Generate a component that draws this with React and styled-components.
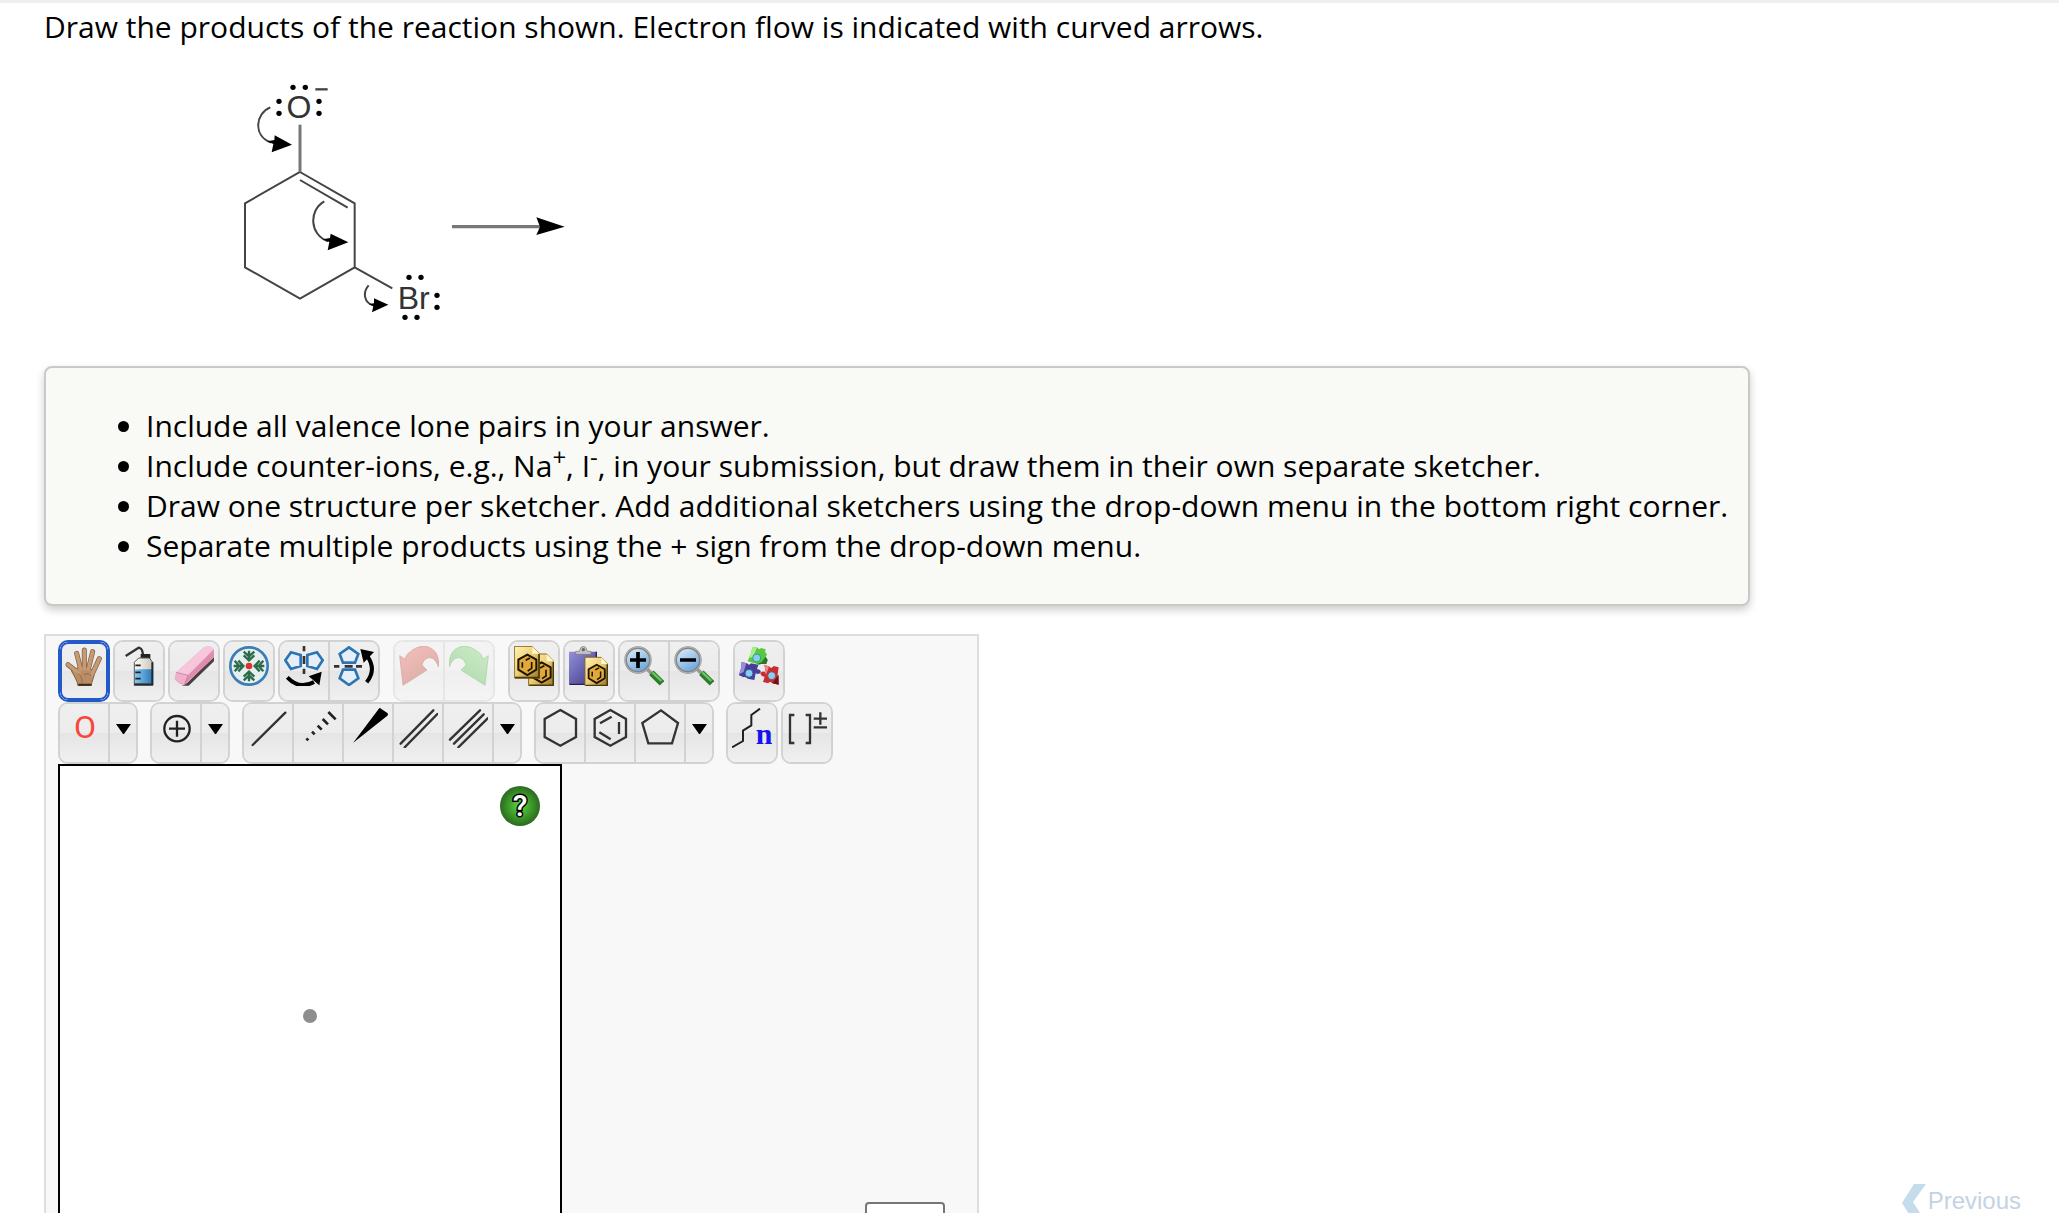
import { useState } from "react";
import styled, { createGlobalStyle, css } from "styled-components";

const GlobalStyle = createGlobalStyle`
  * { box-sizing: border-box; }
  body {
    margin: 0;
    background: #fff;
    color: #000;
    font-family: "Open Sans", "Noto Sans", sans-serif;
  }
`;

const Page = styled.div`
  display: flex;
  justify-content: space-between;
  height: 100vh;
  overflow: hidden;
  border-top: 3px solid #efefef;
`;

const Question = styled.main`
  flex: 1;
  padding: 4px 0 0 44px;
`;

const Prompt = styled.p`
  margin: 0;
  font-size: 30px;
  line-height: 40px;
`;

const Reaction = styled.svg`
  display: block;
  margin: 23px 0 26px 176px;
`;

const Notes = styled.div`
  width: fit-content;
  padding: 38px 20px;
  border: 2px solid #c8cac8;
  border-radius: 8px;
  background: #f9faf5;
  box-shadow: 0 4px 8px rgba(0, 0, 0, 0.2);
`;

const NoteList = styled.ul`
  margin: 0;
  padding-left: 80px;
  font-size: 30px;
  line-height: 40px;

  sup {
    font-size: 24px;
    line-height: 0;
  }
`;

const Sketcher = styled.section`
  width: fit-content;
  margin-top: 28px;
  padding: 4px 0 0 12px;
  border: 2px solid #ddd;
  background: #f8f8f8;
`;

const Toolbar = styled.div`
  display: flex;
  gap: ${(props) => props.$gap}px;
`;

const Cluster = styled.div`
  display: flex;
  gap: 3px;
`;

const Group = styled.div`
  display: flex;
  height: 62px;
  border: 2px solid ${(props) => (props.$active ? "#2459c8" : "#d2d2d2")};
  border-radius: 10px;
  overflow: hidden;
  opacity: ${(props) => (props.$faded ? 0.45 : 1)};
`;

const ToolButton = styled.button`
  display: flex;
  justify-content: center;
  align-items: flex-start;
  width: ${(props) => (props.$narrow ? 26 : 48)}px;
  padding: 4px 0;
  border: 0;
  background: linear-gradient(#efefef, #ececec 50%, #e5e5e5 50%, #f0f0f0);
  box-sizing: content-box;
  height: 50px;

  & + & {
    border-left: 2px solid #d2d2d2;
  }

  ${(props) =>
    props.$active &&
    css`
      border-radius: 8px;
      outline: none;
      box-shadow: inset 0 0 0 2px #2459c8;
    `}
`;

const Workspace = styled.div`
  display: flex;
  justify-content: space-between;
  align-items: flex-end;
  width: 919px;
`;

const Canvas = styled.div`
  position: relative;
  display: grid;
  place-items: center;
  width: 504px;
  height: 504px;
  border: 2px solid #000;
  background: #fff;
`;

const Atom = styled.span`
  width: 14px;
  height: 14px;
  border-radius: 50%;
  background: #8e8e8e;
`;

const HelpButton = styled.button`
  position: absolute;
  top: 20px;
  right: 20px;
  padding: 0;
  border: 0;
  background: none;
  line-height: 0;
`;

const AddSelect = styled.select`
  width: 80px;
  height: 40px;
  margin: 0 32px 26px 0;
  border: 2px solid #767676;
  border-radius: 4px;
  background: #fff;
  font-size: 24px;
`;

const PreviousLink = styled.a`
  display: flex;
  align-items: center;
  align-self: flex-end;
  height: 36px;
  margin: 0 38px -6px 0;
  color: #c3d3e3;
  font: 24px/28px "Liberation Sans", Arial, sans-serif;
  text-decoration: none;
`;

const pageShape = "M0 0H54L75 22V95H0Z";
const hexShape = "M61 6L108 33V87L61 113L14 87V33Z";

const Magnifier = ({ plus }) => (
  <>
    <path d="M70 70L88 87" stroke="#999" strokeWidth="11" />
    <path d="M82 80L114 112" stroke="#2d7a2b" strokeWidth="19" />
    <path d="M85 79L112 105" stroke="#6cc565" strokeWidth="7" />
    <circle cx="42" cy="42" r="37" fill="url(#lens)" stroke="#858585" strokeWidth="8" />
    <circle cx="42" cy="42" r="39" fill="none" stroke="#d0d0d0" strokeWidth="2" />
    <path d={plus ? "M18 42H66M42 18V66" : "M18 42H66"} stroke="#000" strokeWidth="11" />
  </>
);

const RingSheet = ({ x, y, scale = 1 }) => (
  <g transform={`translate(${x} ${y}) scale(${scale})`}>
    <path d={pageShape} fill="url(#gold)" stroke="#8a6a1c" strokeWidth="3" />
    <path d="M54 0V22H75Z" fill="#fff7cf" />
    <path d="M2 94H74V24" fill="none" stroke="#4c390a" strokeWidth="5" />
    <path d="M39 25L66 40V70L39 86L12 70V40Z" fill="#e0a93a" stroke="#1c1503" strokeWidth="6" />
    <path d="M24 48V64M34 42L47 35M52 47V66L40 74" fill="none" stroke="#1c1503" strokeWidth="5" />
  </g>
);

const Fingers = "M45 82L12 56M50 70L38 22M61 68V12M73 70L86 17M82 90L106 38";

const UndoArrow = "M2 29L12 118L84 72L69 58C76 27 108 27 118 62C126 8 76 -18 34 17Q20 25 19 40Z";

const icons = {
  hand: (
    <>
      <path d={Fingers} stroke="#7d5f46" strokeWidth="15" strokeLinecap="round" fill="none" />
      <path d="M33 70C45 60 76 60 90 78C92 94 82 106 82 119H42C40 103 30 90 22 74Z" fill="#b98c66" stroke="#7d5f46" strokeWidth="3" />
      <path d={Fingers} stroke="#c69a72" strokeWidth="11" strokeLinecap="round" fill="none" />
      <path d="M42 82Q56 94 54 112M60 86Q76 78 82 92" stroke="#96694a" strokeWidth="3" fill="none" />
      <path d="M43 113H82V119H43Z" fill="#3c2819" />
    </>
  ),
  bottle: (
    <>
      <path d="M20 30L59 5Q70 6 72 26" fill="none" stroke="#333" strokeWidth="7" />
      <path d="M65 24H94V38H65Z" fill="#222" />
      <path d="M59 36H91L101 49V119H46V49Z" fill="url(#cream)" stroke="#555" strokeWidth="3" />
      <path d="M48 70H100V112H48Z" fill="url(#water)" />
      <path d="M46 115H101M100 49V118" stroke="#202a33" strokeWidth="6" />
      <path d="M49 58H65M49 79H65M49 98H65" stroke="#222" strokeWidth="5" />
    </>
  ),
  eraser: (
    <>
      <path d="M24 119L40 110L120 30V46L44 119Z" fill="#22161b" opacity="0.8" />
      <path d="M7 79L90 4Q110 -4 119 10L120 34L31 118Q15 115 2 99Z" fill="#e6a0bf" />
      <path d="M7 79L90 4Q110 -4 119 10L42 88Z" fill="#f6c6da" />
      <path d="M42 88L119 12L120 34L30 118Z" fill="#dd8db0" />
      <path d="M7 79L42 88L30 118L2 99Z" fill="#eeb0cb" />
      <path d="M7 79L42 88L31 117" fill="none" stroke="#c47799" strokeWidth="2" />
    </>
  ),
  clean: (
    <>
      <circle cx="60" cy="60" r="56" fill="#e6eff0" stroke="#3b7db5" strokeWidth="8" />
      {[0, 90, 180, 270].map((angle) => (
        <g key={angle} transform={`rotate(${angle} 60 60)`} fill="none" stroke="#2c6b4a" strokeWidth="7">
          <path d="M60 14V46M44 28L60 43L76 28M44 17L60 31L76 17" />
        </g>
      ))}
      <circle cx="60" cy="60" r="10" fill="#d8332e" />
    </>
  ),
  flipH: (
    <>
      <path d="M4 43L21 19L50 27V60L21 69ZM116 43L99 19L70 27V60L99 69Z" fill="#e6eff7" stroke="#2c75b5" strokeWidth="8" />
      <path d="M60 0V16M60 30V54M60 68V84" stroke="#333" strokeWidth="8" />
      <path d="M10 94Q45 132 90 108" fill="none" stroke="#000" strokeWidth="12" />
      <path d="M113 77L106 118L74 91Z" fill="#000" />
    </>
  ),
  flipV: (
    <>
      <path d="M45 4L73 24L63 50H27L17 24ZM45 117L73 97L63 71H27L17 97Z" fill="#e6eff7" stroke="#2c75b5" strokeWidth="8" />
      <path d="M0 61H16M32 61H56M66 61H84" stroke="#333" strokeWidth="8" />
      <path d="M98 109Q128 72 101 32" fill="none" stroke="#000" strokeWidth="12" />
      <path d="M79 9L120 18L89 50Z" fill="#000" />
    </>
  ),
  undo: <path d={UndoArrow} fill="url(#undoRed)" stroke="#a33c32" strokeWidth="2" />,
  redo: <path d={UndoArrow} transform="translate(120 0) scale(-1 1)" fill="url(#redoGreen)" stroke="#4d9c4a" strokeWidth="2" />,
  copy: (
    <>
      <RingSheet x={44} y={24} />
      <RingSheet x={1} y={1} />
    </>
  ),
  paste: (
    <>
      <path d="M0 17H84V114H0Z" fill="url(#purple)" />
      <path d="M1 115H50M82 17V36" stroke="#25204f" strokeWidth="4" />
      <path d="M20 25V16H31Q34 1 43 1T55 16H66V25Z" fill="#c4c4c4" stroke="#777" strokeWidth="2" />
      <circle cx="43" cy="11" r="5" fill="#666" />
      <RingSheet x={48} y={34} scale={0.9} />
    </>
  ),
  zoomIn: <Magnifier plus />,
  zoomOut: <Magnifier />,
  pieces: (
    <>
      <path d="M42 2L56 5Q60 12 66 6L80 10L78 18Q88 24 80 32L86 42L82 54L68 52Q60 62 54 54L26 46L32 30Q38 24 36 18Z" fill="#58c840" />
      <path d="M42 2L54 5L42 32L30 36L36 18Z" fill="#a6ee8e" />
      <path d="M80 32L86 42L82 54L54 54L68 48Z" fill="#2b742b" />
      <path d="M8 48L24 52Q30 60 36 52L58 56L54 70Q64 68 66 78Q60 88 50 82L46 102L26 98Q20 90 14 94L0 88L4 72Q10 66 6 60Z" fill="#493d9c" />
      <path d="M8 48L22 52L14 78L2 84L4 72Q10 66 6 60Z" fill="#988fd6" />
      <path d="M76 56L92 62Q96 70 104 60L119 64L116 84L119 116L100 112Q92 104 88 112L72 108L77 92Q66 92 64 82Q68 74 80 78Z" fill="#c92b31" />
      <path d="M76 56L90 62L82 84L77 82L80 76Z" fill="#f08585" />
      <path d="M119 86V116L100 112Z" fill="#6d1216" />
      <circle cx="53" cy="36" r="12" fill="#86cdf0" stroke="#3a9c8c" strokeWidth="3" />
      <circle cx="30" cy="82" r="12" fill="#86cdf0" stroke="#2c5a9a" strokeWidth="3" />
      <circle cx="98" cy="89" r="12" fill="#8dcdf0" stroke="#8f4450" strokeWidth="3" />
    </>
  ),
  oxygen: (
    <text x="63" y="91" textAnchor="middle" fontFamily="Roboto, sans-serif" fontSize="96" fill="#f8463b">O</text>
  ),
  charge: (
    <g fill="none" stroke="#222" strokeWidth="7">
      <circle cx="63" cy="62" r="38" />
      <path d="M39 62H87M63 38V86" />
    </g>
  ),
  single: <path d="M14 111L112 14" stroke="#333" strokeWidth="7" strokeLinecap="round" />,
  hash: <path d="M25 91L31 97M42 71L50 79M59 53L71 65M74 33L90 49M91 12L113 34" stroke="#222" strokeWidth="8" />,
  wedge: <path d="M15 105L92 3Q95 -2 99 2L118 15Q122 19 118 23Z" fill="#000" />,
  double: <path d="M8 107L106 7M20 118L118 18" stroke="#333" strokeWidth="7" strokeLinecap="round" />,
  triple: <path d="M6 95L96 7M18 107L107 19M31 118L119 31" stroke="#333" strokeWidth="7" strokeLinecap="round" />,
  hexagon: <path d={hexShape} fill="none" stroke="#333" strokeWidth="7" />,
  benzene: <path d={`${hexShape}M30 46L65 26M87 42V78M28 73L62 94`} fill="none" stroke="#333" strokeWidth="7" />,
  pentagon: <path d="M63 7L114 45L96 106H25L7 45Z" fill="none" stroke="#333" strokeWidth="7" />,
  chain: (
    <>
      <path d="M0 118L33 99V68L58 52V21L84 2" fill="none" stroke="#222" strokeWidth="6" />
      <text x="71" y="107" fontFamily="Liberation Serif, serif" fontWeight="bold" fontSize="90" fill="#1414f0">n</text>
    </>
  ),
  bracket: (
    <path d="M22 21H9V105H22M56 21H69V105H56M80 32H120M100 13V50M80 58H120" fill="none" stroke="#333" strokeWidth="7" />
  ),
};

const Tool = ({ name, label, active, onClick }) => (
  <ToolButton type="button" aria-label={label} title={label} $active={active} onClick={onClick}>
    <svg width="40" height="40" viewBox="0 0 120 120">{icons[name]}</svg>
  </ToolButton>
);

const MoreButton = ({ label }) => (
  <ToolButton type="button" aria-label={label} title={label} $narrow>
    <svg width="26" height="40" viewBox="0 0 26 40">
      <path d="M6 16H21L14 26H13Z" fill="#000" />
    </svg>
  </ToolButton>
);

// gradients shared by the toolbar icons
const Gradients = () => (
  <svg width="0" height="0" display="block" aria-hidden="true">
    <defs>
      <linearGradient id="lens" x2="0.6" y2="1">
        <stop stopColor="#e7f3fe" />
        <stop offset="1" stopColor="#6ba6dd" />
      </linearGradient>
      <linearGradient id="gold" x2="1" y2="1">
        <stop stopColor="#fff3b5" />
        <stop offset="0.5" stopColor="#eccd72" />
        <stop offset="1" stopColor="#9a7425" />
      </linearGradient>
      <linearGradient id="cream">
        <stop stopColor="#fffdf6" />
        <stop offset="1" stopColor="#c9c5bd" />
      </linearGradient>
      <linearGradient id="water">
        <stop stopColor="#86c8f2" />
        <stop offset="1" stopColor="#2c78b8" />
      </linearGradient>
      <linearGradient id="purple" x2="1" y2="1">
        <stop stopColor="#9490dc" />
        <stop offset="1" stopColor="#3d3784" />
      </linearGradient>
      <linearGradient id="undoRed" x2="0.7" y2="1">
        <stop stopColor="#f07b70" />
        <stop offset="1" stopColor="#bd5349" />
      </linearGradient>
      <linearGradient id="redoGreen" x2="0.7" y2="1">
        <stop stopColor="#9de089" />
        <stop offset="1" stopColor="#59b758" />
      </linearGradient>
      <radialGradient id="helpGreen">
        <stop stopColor="#62dc42" />
        <stop offset="0.45" stopColor="#43a82d" />
        <stop offset="1" stopColor="#2b6a20" />
      </radialGradient>
    </defs>
  </svg>
);

const lonePairs = [
  [219, 52], [256, 52], [177, 94], [177, 130], [297, 94], [297, 130],
  [567, 622], [603, 622], [651, 676], [651, 712], [555, 742], [591, 742],
];

const ReactionScheme = () => (
  <Reaction width="380" height="270" viewBox="0 0 1140 810" role="img" aria-label="Reaction scheme">
    <g fill="none" stroke="#444" strokeWidth="6">
      <path d="M240 306L404 400V592L240 686L75 592V400ZM240 330L383 413M404 592L517 655" />
      <path d="M240 306V164" stroke="#777" strokeWidth="9" />
      <path d="M696 470H960" stroke="#777" strokeWidth="10" />
      <path d="M286 58H323" strokeWidth="7" />
      <path d="M151 112C106 130 98 198 154 218M313 394C266 420 268 494 324 514M446 646C428 666 430 700 464 708" strokeWidth="6" />
    </g>
    <g fill="#000">
      <path d="M164 196L216 224L155 247L160 222L142 214L163 210Z" />
      <path d="M332 491L385 517L323 541L328 516L308 508L330 504Z" />
      <path d="M462 685L505 704L456 727L460 708L446 702L462 700Z" />
      <path d="M949 442L1034 470L949 495L960 470Z" />
      {lonePairs.map(([x, y]) => (
        <circle key={`${x}-${y}`} cx={x} cy={y} r="8" />
      ))}
    </g>
    <g fill="#333" fontFamily="Liberation Sans, Arial, sans-serif" fontSize="96">
      <text x="237" y="145" textAnchor="middle">O</text>
      <text x="533" y="716">Br</text>
    </g>
  </Reaction>
);

const App = () => {
  const [tool, setTool] = useState("hand");

  return (
    <>
      <GlobalStyle />
      <Page>
        <Question>
          <Gradients />
          <Prompt>Draw the products of the reaction shown. Electron flow is indicated with curved arrows.</Prompt>
          <ReactionScheme />
          <Notes>
            <NoteList>
              <li>Include all valence lone pairs in your answer.</li>
              <li>
                Include counter-ions, e.g., Na<sup>+</sup>, I<sup>-</sup>, in your submission, but draw them in their own
                separate sketcher.
              </li>
              <li>Draw one structure per sketcher. Add additional sketchers using the drop-down menu in the bottom right corner.</li>
              <li>Separate multiple products using the + sign from the drop-down menu.</li>
            </NoteList>
          </Notes>
          <Sketcher>
            <Toolbar $gap={13}>
              <Cluster>
                <Group $active={tool === "hand"}>
                  <Tool name="hand" label="Move" active={tool === "hand"} onClick={() => setTool("hand")} />
                </Group>
                <Group><Tool name="bottle" label="Clear" /></Group>
                <Group><Tool name="eraser" label="Erase" /></Group>
                <Group><Tool name="clean" label="Clean" /></Group>
                <Group>
                  <Tool name="flipH" label="Flip horizontally" />
                  <Tool name="flipV" label="Flip vertically" />
                </Group>
              </Cluster>
              <Group $faded>
                <Tool name="undo" label="Undo" />
                <Tool name="redo" label="Redo" />
              </Group>
              <Cluster>
                <Group><Tool name="copy" label="Copy" /></Group>
                <Group><Tool name="paste" label="Paste" /></Group>
                <Group>
                  <Tool name="zoomIn" label="Zoom in" />
                  <Tool name="zoomOut" label="Zoom out" />
                </Group>
              </Cluster>
              <Group><Tool name="pieces" label="Templates" /></Group>
            </Toolbar>
            <Toolbar $gap={12}>
              <Group>
                <Tool name="oxygen" label="Oxygen" />
                <MoreButton label="More elements" />
              </Group>
              <Group>
                <Tool name="charge" label="Increase charge" />
                <MoreButton label="More charges" />
              </Group>
              <Group>
                <Tool name="single" label="Single bond" />
                <Tool name="hash" label="Hashed bond" />
                <Tool name="wedge" label="Wedge bond" />
                <Tool name="double" label="Double bond" />
                <Tool name="triple" label="Triple bond" />
                <MoreButton label="More bonds" />
              </Group>
              <Group>
                <Tool name="hexagon" label="Cyclohexane" />
                <Tool name="benzene" label="Benzene" />
                <Tool name="pentagon" label="Cyclopentane" />
                <MoreButton label="More rings" />
              </Group>
              <Cluster>
                <Group><Tool name="chain" label="Chain" /></Group>
                <Group><Tool name="bracket" label="Bracket" /></Group>
              </Cluster>
            </Toolbar>
            <Workspace>
              <Canvas>
                <Atom />
                <HelpButton type="button" aria-label="Help">
                  <svg width="40" height="40" viewBox="0 0 40 40">
                    <circle cx="20" cy="20" r="20" fill="url(#helpGreen)" />
                    <text
                      x="20"
                      y="30"
                      textAnchor="middle"
                      fontFamily="Roboto, sans-serif"
                      fontWeight="500"
                      fontSize="30"
                      fill="#fff"
                      stroke="#000"
                      strokeWidth="3"
                      paintOrder="stroke"
                    >?</text>
                  </svg>
                </HelpButton>
              </Canvas>
              <AddSelect aria-label="Add sketcher" defaultValue="">
                <option value=""></option>
              </AddSelect>
            </Workspace>
          </Sketcher>
        </Question>
        <PreviousLink href="#previous">
          <svg width="26" height="36" viewBox="0 0 26 36">
            <path d="M12 1H24L11 19L22 36H10L0 20Z" fill="#c5dcec" />
          </svg>
          Previous
        </PreviousLink>
      </Page>
    </>
  );
};

export default App;
